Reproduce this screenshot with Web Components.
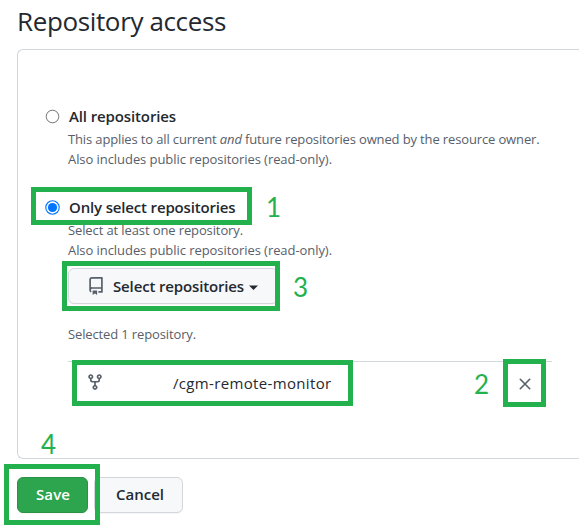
<!DOCTYPE html>
<html lang="en"><head><meta charset="utf-8"><title>Repository access</title>
<style>
html,body{margin:0;height:527px;overflow:hidden;background:#fff}
body{font-family:"Open Sans","Noto Sans",sans-serif;color:#24292f;position:relative}
</style></head><body>
<access-page></access-page>
<script>
// One line of text whose letter spacing is adjusted so that it fills `w` pixels.
class FitLine extends HTMLElement{
  connectedCallback(){
    const r=this.attachShadow({mode:'open'});
    r.innerHTML='<style>:host{display:block;white-space:nowrap}span{display:inline-block;font-kerning:normal}</style><span><slot></slot></span>';
    const s=r.querySelector('span'),n=this.textContent.length;
    const w=+this.getAttribute('w');
    s.style.letterSpacing=((w-s.getBoundingClientRect().width)/n).toFixed(4)+'px';
  }
}
class RadioOption extends HTMLElement{
  connectedCallback(){
    const on=this.hasAttribute('checked');
    this.attachShadow({mode:'open'}).innerHTML=`<style>
    :host{display:grid;grid-template-columns:13px 1fr;column-gap:10px}
    svg{margin-top:4.5px;display:block;overflow:visible}
    .t{display:block;font-weight:570;font-size:15px;line-height:22px;height:24px}
    .d{font-size:13px;line-height:20px;color:#57606a;margin-left:-1px}
    </style><svg width="13" height="13" viewBox="0 0 13 13">${on?
    '<circle cx="6.5" cy="6.5" r="6.7" fill="#fff" stroke="#0075ff" stroke-width="1.1"/><circle cx="6.5" cy="6.5" r="4.6" fill="#0075ff"/>':
    '<circle cx="6.5" cy="6.5" r="6.3" fill="#fff" stroke="#767676"/>'}</svg>
    <div><slot class="t" name="title"></slot><div class="d"><slot></slot></div></div>`;
  }
}
class UiButton extends HTMLElement{
  connectedCallback(){
    this.attachShadow({mode:'open'}).innerHTML=`<style>
    :host{display:flex;box-sizing:border-box;height:36px;align-items:center;border:1px solid #d3d6da;border-radius:6px;background:#f6f8fa;font-size:15px;font-weight:600;line-height:22px;box-shadow:0 1px 0 rgba(27,31,36,.04)}
    :host([primary]){background:#2da44e;border-color:#2a9147;color:#fff}
    </style><slot></slot>`;
  }
}
const ICONS={
 repo:['0 0 16 16',18,18,'<path d="M2 2.5A2.5 2.5 0 0 1 4.5 0h8.75a.75.75 0 0 1 .75.75v12.5a.75.75 0 0 1-.75.75h-2.5a.75.75 0 0 1 0-1.5h1.75v-2h-8a1 1 0 0 0-.714 1.7.75.75 0 0 1-1.072 1.05A2.495 2.495 0 0 1 2 11.5Zm10.5-1h-8a1 1 0 0 0-1 1v6.708A2.486 2.486 0 0 1 4.5 9h8ZM5 12.25a.25.25 0 0 1 .25-.25h3.5a.25.25 0 0 1 .25.25v3.25a.25.25 0 0 1-.4.2l-1.45-1.087a.25.25 0 0 0-.3 0L5.4 15.7a.25.25 0 0 1-.4-.2Z"/>'],
 fork:['0 0 16 16',18,18,'<path d="M5 5.372v.878c0 .414.336.75.75.75h4.5a.75.75 0 0 0 .75-.75v-.878a2.25 2.25 0 1 1 1.5 0v.878a2.25 2.25 0 0 1-2.25 2.25h-1.5v2.128a2.251 2.251 0 1 1-1.5 0V8.5h-1.5A2.25 2.25 0 0 1 3.5 6.25v-.878a2.25 2.25 0 1 1 1.5 0ZM5 3.25a.75.75 0 1 0-1.5 0 .75.75 0 0 0 1.5 0Zm6.75.75a.75.75 0 1 0 0-1.5.75.75 0 0 0 0 1.5Zm-3 8.75a.75.75 0 1 0-1.5 0 .75.75 0 0 0 1.5 0Z"/>'],
 x:['0 0 12 12',12,12,'<path d="M1.3 1.3 10.7 10.7M10.7 1.3 1.3 10.7" stroke="currentColor" stroke-width="1.6" stroke-linecap="round"/>'],
 caret:['0 0 9 5',9,5,'<path d="M0 .5h9L4.5 5Z"/>']
};
class UiIcon extends HTMLElement{
  connectedCallback(){
    const [vb,w,h,p]=ICONS[this.getAttribute('name')];
    this.attachShadow({mode:'open'}).innerHTML=`<style>:host{display:block;flex:none;color:#57606a}svg{display:block}</style><svg width="${w}" height="${h}" viewBox="${vb}" fill="currentColor">${p}</svg>`;
  }
}
// Annotation drawn over the page: a green rectangle or a step number.
class StepMark extends HTMLElement{
  connectedCallback(){
    const [x,y,w,h]=this.getAttribute('box').split(' ');
    this.attachShadow({mode:'open'}).innerHTML=`<style>
    :host{position:absolute;box-sizing:border-box;left:${x}px;top:${y}px;${w?`width:${w}px;height:${h}px;border:5px solid #22b14c;`:''}color:#22b14c;font:26px/32px Lato,sans-serif}</style><slot></slot>`;
  }
}
class AccessPage extends HTMLElement{
  connectedCallback(){
    this.attachShadow({mode:'open'}).innerHTML=`<style>
    :host{display:block;padding:3px 0 0 17px}
    .h{font-size:26px;line-height:36px;height:46px}
    .panel{box-sizing:border-box;height:410px;border:1px solid #d0d7de;border-right:0;border-radius:6px 0 0 6px;padding:55px 0 0 28px}
    .first{height:91px}
    .sub{padding-left:22px;width:484px}
    .pick{width:210px;margin-top:8px;padding-left:18px}
    .pick .lab{margin-left:8px}
    .pick .c{margin:2px 0 0 5px;color:#24292f}
    .note{font-size:13px;line-height:20px;color:#57606a;margin-top:20px}
    .row{display:flex;align-items:center;margin-top:17px;border-top:1px solid #d0d7de;height:45px;padding:0 21px 0 18px}
    .row .n{font-size:15px;font-weight:520;margin:-4px 0 0 69px}
    .row .f{margin-top:-5px}
    .row .x{margin:-2px 0 0 auto}
    .foot{display:flex;gap:6px;padding-top:18px}
    .foot ui-button{padding-bottom:2px}
    .save{width:71px;padding-left:18px}.cancel{width:89px;padding-left:21px}
    .cancel,.pick{font-weight:550}
    </style>
    <fit-line class="h" w="209">Repository access</fit-line>
    <div class="panel">
      <radio-option class="first"><fit-line slot="title" w="107">All repositories</fit-line>
        <fit-line w="471.5">This applies to all current <i>and</i> future repositories owned by the resource owner.</fit-line>
        <fit-line w="264">Also includes public repositories (read-only).</fit-line></radio-option>
      <radio-option checked><fit-line slot="title" w="166.5">Only select repositories</fit-line>
        <fit-line class="s" w="175">Select at least one repository.</fit-line>
        <fit-line w="264">Also includes public repositories (read-only).</fit-line></radio-option>
      <div class="sub">
        <ui-button class="pick"><ui-icon name="repo"></ui-icon><fit-line class="lab" w="131">Select repositories</fit-line><ui-icon class="c" name="caret"></ui-icon></ui-button>
        <fit-line class="note" w="128">Selected 1 repository.</fit-line>
        <div class="row"><ui-icon class="f" name="fork"></ui-icon><fit-line class="n" w="158.5">/cgm-remote-monitor</fit-line><ui-icon class="x" name="x"></ui-icon></div>
      </div>
    </div>
    <div class="foot"><ui-button class="save" primary><fit-line w="34">Save</fit-line></ui-button><ui-button class="cancel"><fit-line w="48">Cancel</fit-line></ui-button></div>
    <step-mark box="31 187 221 38"></step-mark><step-mark box="62 261 218 50"></step-mark>
    <step-mark box="72 360 281 46"></step-mark><step-mark box="503 359 43 48"></step-mark><step-mark box="4 464 96 61"></step-mark>
    <step-mark box="266 191">1</step-mark><step-mark box="474 368">2</step-mark><step-mark box="293 271">3</step-mark><step-mark box="41 428">4</step-mark>`;
  }
}
customElements.define('fit-line',FitLine);
customElements.define('radio-option',RadioOption);
customElements.define('ui-button',UiButton);
customElements.define('ui-icon',UiIcon);
customElements.define('step-mark',StepMark);
customElements.define('access-page',AccessPage);
</script></body></html>
